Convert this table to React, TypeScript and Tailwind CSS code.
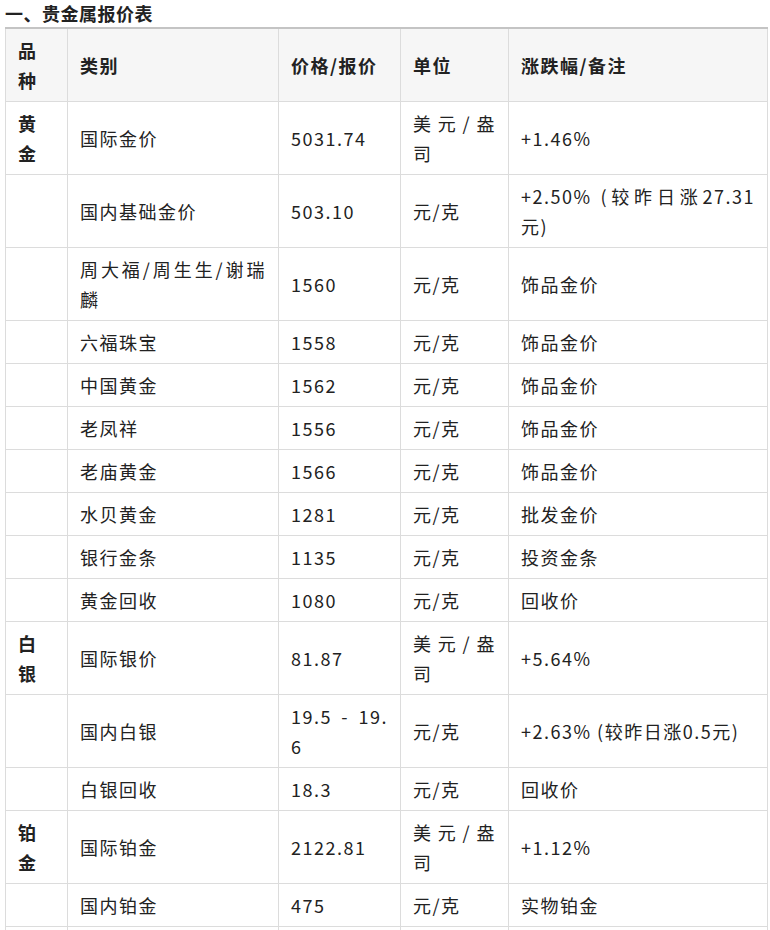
import React from 'react';

interface PriceRow {
  kind?: string;
  name: string;
  price: string;
  unit: string;
  note: string;
}

const rows: PriceRow[] = [
  { kind: '黄金', name: '国际金价', price: '5031.74', unit: '美元/盎司', note: '+1.46%' },
  { name: '国内基础金价', price: '503.10', unit: '元/克', note: '+2.50% (较昨日涨27.31元)' },
  { name: '周大福/周生生/谢瑞麟', price: '1560', unit: '元/克', note: '饰品金价' },
  { name: '六福珠宝', price: '1558', unit: '元/克', note: '饰品金价' },
  { name: '中国黄金', price: '1562', unit: '元/克', note: '饰品金价' },
  { name: '老凤祥', price: '1556', unit: '元/克', note: '饰品金价' },
  { name: '老庙黄金', price: '1566', unit: '元/克', note: '饰品金价' },
  { name: '水贝黄金', price: '1281', unit: '元/克', note: '批发金价' },
  { name: '银行金条', price: '1135', unit: '元/克', note: '投资金条' },
  { name: '黄金回收', price: '1080', unit: '元/克', note: '回收价' },
  { kind: '白银', name: '国际银价', price: '81.87', unit: '美元/盎司', note: '+5.64%' },
  { name: '国内白银', price: '19.5 - 19.6', unit: '元/克', note: '+2.63% (较昨日涨0.5元)' },
  { name: '白银回收', price: '18.3', unit: '元/克', note: '回收价' },
  { kind: '铂金', name: '国际铂金', price: '2122.81', unit: '美元/盎司', note: '+1.12%' },
  { name: '国内铂金', price: '475', unit: '元/克', note: '实物铂金' },
];

const cell = 'border border-[#dcdcdc] px-[12px] py-[6px] align-middle text-justify break-all';

const App: React.FC = () => {
  return (
    <div className="min-h-screen bg-white pl-[5px] text-[#222] font-['Noto_Sans_CJK_SC','Noto_Sans',sans-serif]">
      <h3 className="text-[18px] font-bold leading-[27px] tracking-[0.5px]">一、贵金属报价表</h3>
      <table className="w-[762px] table-fixed border-collapse border-t-2 border-t-[#c4c4c4] text-[18px] leading-[30px] tracking-[1.5px]">
        <colgroup>
          <col className="w-[62px]" />
          <col className="w-[211px]" />
          <col className="w-[122px]" />
          <col className="w-[108px]" />
          <col className="w-[259px]" />
        </colgroup>
        <thead>
          <tr className="bg-[#f6f6f6] font-bold text-left">
            <th className={`${cell} border-t-2 border-t-[#c4c4c4]`}>品种</th>
            <th className={`${cell} border-t-2 border-t-[#c4c4c4]`}>类别</th>
            <th className={`${cell} border-t-2 border-t-[#c4c4c4]`}>价格/报价</th>
            <th className={`${cell} border-t-2 border-t-[#c4c4c4]`}>单位</th>
            <th className={`${cell} border-t-2 border-t-[#c4c4c4]`}>涨跌幅/备注</th>
          </tr>
        </thead>
        <tbody>
          {rows.map((r, i) => (
            <tr key={i}>
              <td className={`${cell} font-bold`}>{r.kind || ''}</td>
              <td className={cell}>{r.name}</td>
              <td className={cell}>{r.price}</td>
              <td className={cell}>{r.unit}</td>
              <td className={cell}>{r.note}</td>
            </tr>
          ))}
          <tr>
            <td className={cell}>&nbsp;</td>
            <td className={cell}>&nbsp;</td>
            <td className={cell}>&nbsp;</td>
            <td className={cell}>&nbsp;</td>
            <td className={cell}>&nbsp;</td>
          </tr>
        </tbody>
      </table>
    </div>
  );
};

export default App;
